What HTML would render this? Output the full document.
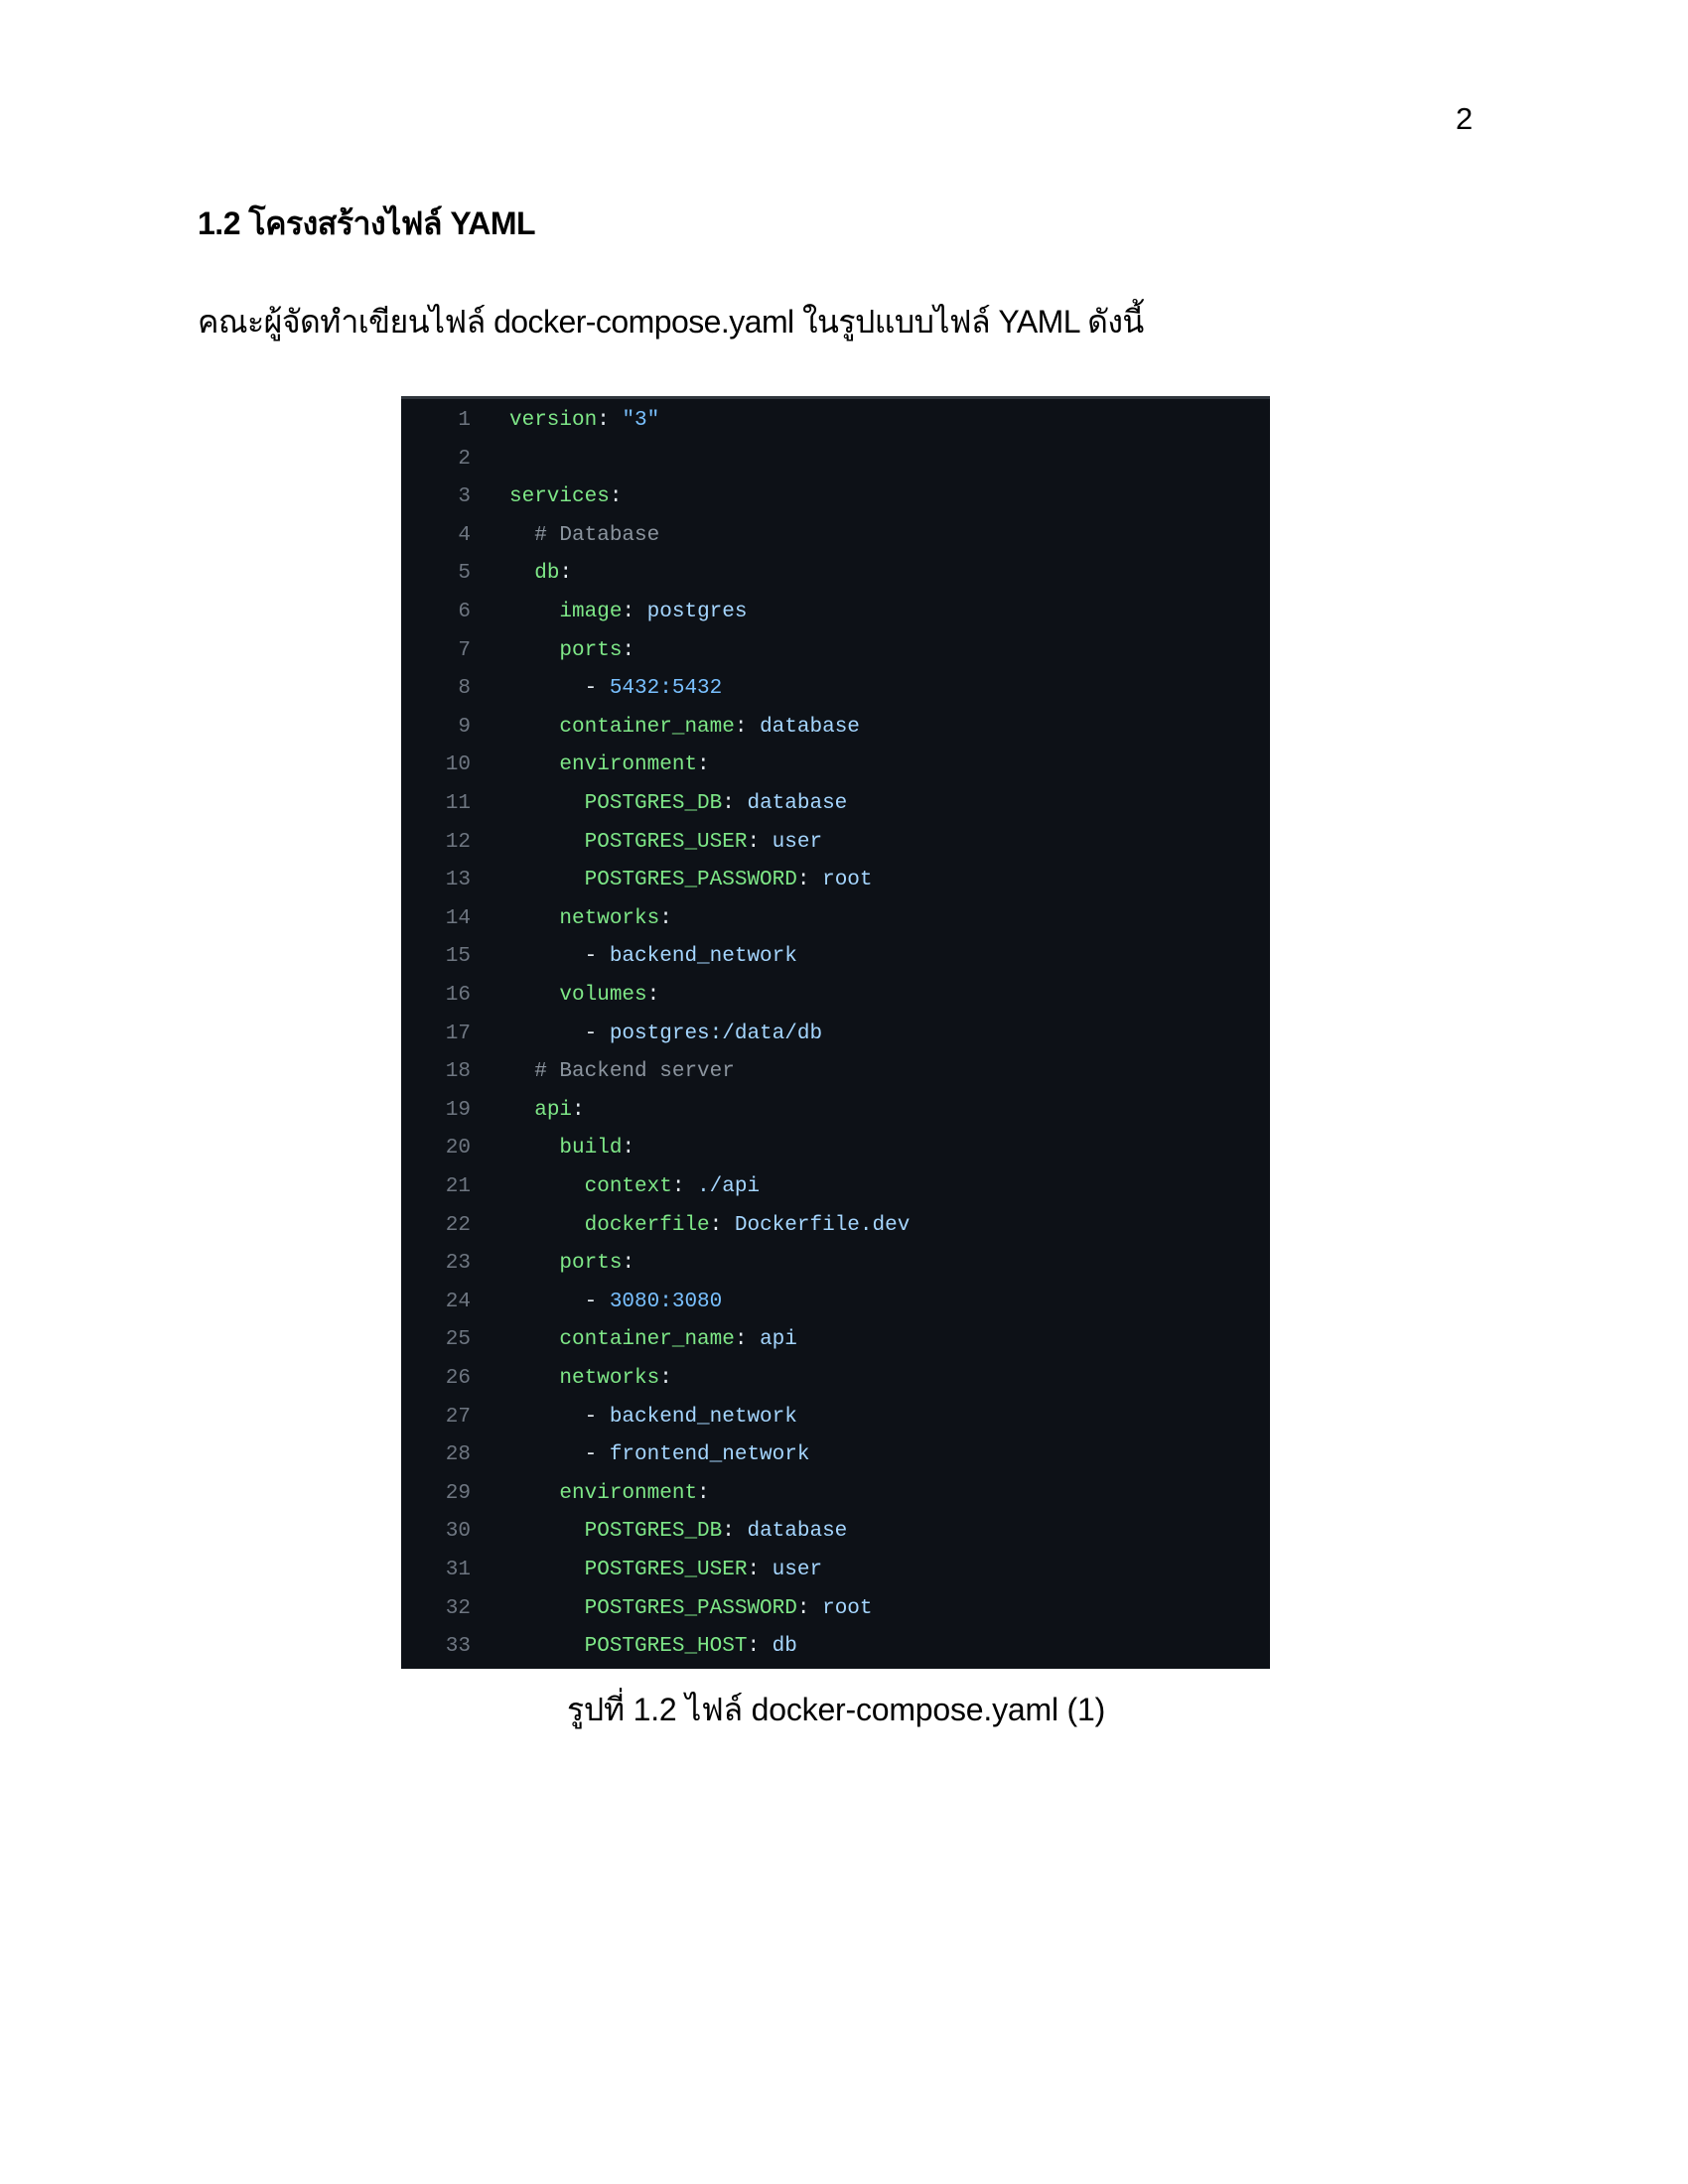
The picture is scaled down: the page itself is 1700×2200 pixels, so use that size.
<!DOCTYPE html>
<html><head><meta charset="utf-8"><style>
body{margin:0;width:1700px;height:2200px;background:#fff;position:relative;font-family:"Liberation Sans","DejaVu Sans",sans-serif;color:#000;overflow:hidden}
.a{position:absolute;white-space:nowrap}
#code{position:absolute;left:404px;top:399px;width:875px;height:1282px;background:#0d1117;border-top:3px solid #30363d;box-sizing:border-box}
.l{position:absolute;left:0;height:38px;line-height:38px;font-family:"Liberation Mono","DejaVu Sans Mono",monospace;font-size:21px;white-space:pre}
.n{position:absolute;width:70px;text-align:right;color:#6e7681}
.c{position:absolute;left:109px;color:#e6edf3}
.k{color:#7ee787}.v{color:#a5d6ff}.d{color:#79c0ff}.m{color:#8b949e}
</style></head><body>
<div class="a" style="left:1466px;top:102px;font-size:31px">2</div>
<div class="a" style="left:199px;top:200px;font-size:32px;font-weight:bold;letter-spacing:-0.5px">1.2 โครงสร้างไฟล์ YAML</div>
<div class="a" style="left:199px;top:299px;font-size:32px;letter-spacing:-0.55px">คณะผู้จัดทำเขียนไฟล์ docker-compose.yaml ในรูปแบบไฟล์ YAML ดังนี้</div>
<div id="code">
<div class="l" style="top:3px"><span class="n">1</span><span class="c"><span class="k">version</span>: <span class="d">"3"</span></span></div>
<div class="l" style="top:41.6px"><span class="n">2</span></div>
<div class="l" style="top:80.2px"><span class="n">3</span><span class="c"><span class="k">services</span>:</span></div>
<div class="l" style="top:118.8px"><span class="n">4</span><span class="c">  <span class="m"># Database</span></span></div>
<div class="l" style="top:157.4px"><span class="n">5</span><span class="c">  <span class="k">db</span>:</span></div>
<div class="l" style="top:196px"><span class="n">6</span><span class="c">    <span class="k">image</span>: <span class="v">postgres</span></span></div>
<div class="l" style="top:234.6px"><span class="n">7</span><span class="c">    <span class="k">ports</span>:</span></div>
<div class="l" style="top:273.2px"><span class="n">8</span><span class="c">      - <span class="d">5432:5432</span></span></div>
<div class="l" style="top:311.8px"><span class="n">9</span><span class="c">    <span class="k">container_name</span>: <span class="v">database</span></span></div>
<div class="l" style="top:350.4px"><span class="n">10</span><span class="c">    <span class="k">environment</span>:</span></div>
<div class="l" style="top:389px"><span class="n">11</span><span class="c">      <span class="k">POSTGRES_DB</span>: <span class="v">database</span></span></div>
<div class="l" style="top:427.6px"><span class="n">12</span><span class="c">      <span class="k">POSTGRES_USER</span>: <span class="v">user</span></span></div>
<div class="l" style="top:466.2px"><span class="n">13</span><span class="c">      <span class="k">POSTGRES_PASSWORD</span>: <span class="v">root</span></span></div>
<div class="l" style="top:504.8px"><span class="n">14</span><span class="c">    <span class="k">networks</span>:</span></div>
<div class="l" style="top:543.4px"><span class="n">15</span><span class="c">      - <span class="v">backend_network</span></span></div>
<div class="l" style="top:582px"><span class="n">16</span><span class="c">    <span class="k">volumes</span>:</span></div>
<div class="l" style="top:620.6px"><span class="n">17</span><span class="c">      - <span class="v">postgres:/data/db</span></span></div>
<div class="l" style="top:659.2px"><span class="n">18</span><span class="c">  <span class="m"># Backend server</span></span></div>
<div class="l" style="top:697.8px"><span class="n">19</span><span class="c">  <span class="k">api</span>:</span></div>
<div class="l" style="top:736.4px"><span class="n">20</span><span class="c">    <span class="k">build</span>:</span></div>
<div class="l" style="top:775px"><span class="n">21</span><span class="c">      <span class="k">context</span>: <span class="v">./api</span></span></div>
<div class="l" style="top:813.6px"><span class="n">22</span><span class="c">      <span class="k">dockerfile</span>: <span class="v">Dockerfile.dev</span></span></div>
<div class="l" style="top:852.2px"><span class="n">23</span><span class="c">    <span class="k">ports</span>:</span></div>
<div class="l" style="top:890.8px"><span class="n">24</span><span class="c">      - <span class="d">3080:3080</span></span></div>
<div class="l" style="top:929.4px"><span class="n">25</span><span class="c">    <span class="k">container_name</span>: <span class="v">api</span></span></div>
<div class="l" style="top:968px"><span class="n">26</span><span class="c">    <span class="k">networks</span>:</span></div>
<div class="l" style="top:1006.6px"><span class="n">27</span><span class="c">      - <span class="v">backend_network</span></span></div>
<div class="l" style="top:1045.2px"><span class="n">28</span><span class="c">      - <span class="v">frontend_network</span></span></div>
<div class="l" style="top:1083.8px"><span class="n">29</span><span class="c">    <span class="k">environment</span>:</span></div>
<div class="l" style="top:1122.4px"><span class="n">30</span><span class="c">      <span class="k">POSTGRES_DB</span>: <span class="v">database</span></span></div>
<div class="l" style="top:1161px"><span class="n">31</span><span class="c">      <span class="k">POSTGRES_USER</span>: <span class="v">user</span></span></div>
<div class="l" style="top:1199.6px"><span class="n">32</span><span class="c">      <span class="k">POSTGRES_PASSWORD</span>: <span class="v">root</span></span></div>
<div class="l" style="top:1238.2px"><span class="n">33</span><span class="c">      <span class="k">POSTGRES_HOST</span>: <span class="v">db</span></span></div>
</div>
<div class="a" style="left:0;width:1684px;text-align:center;top:1697px;font-size:32px;letter-spacing:-0.2px">รูปที่ 1.2 ไฟล์ docker-compose.yaml (1)</div>
</body></html>
